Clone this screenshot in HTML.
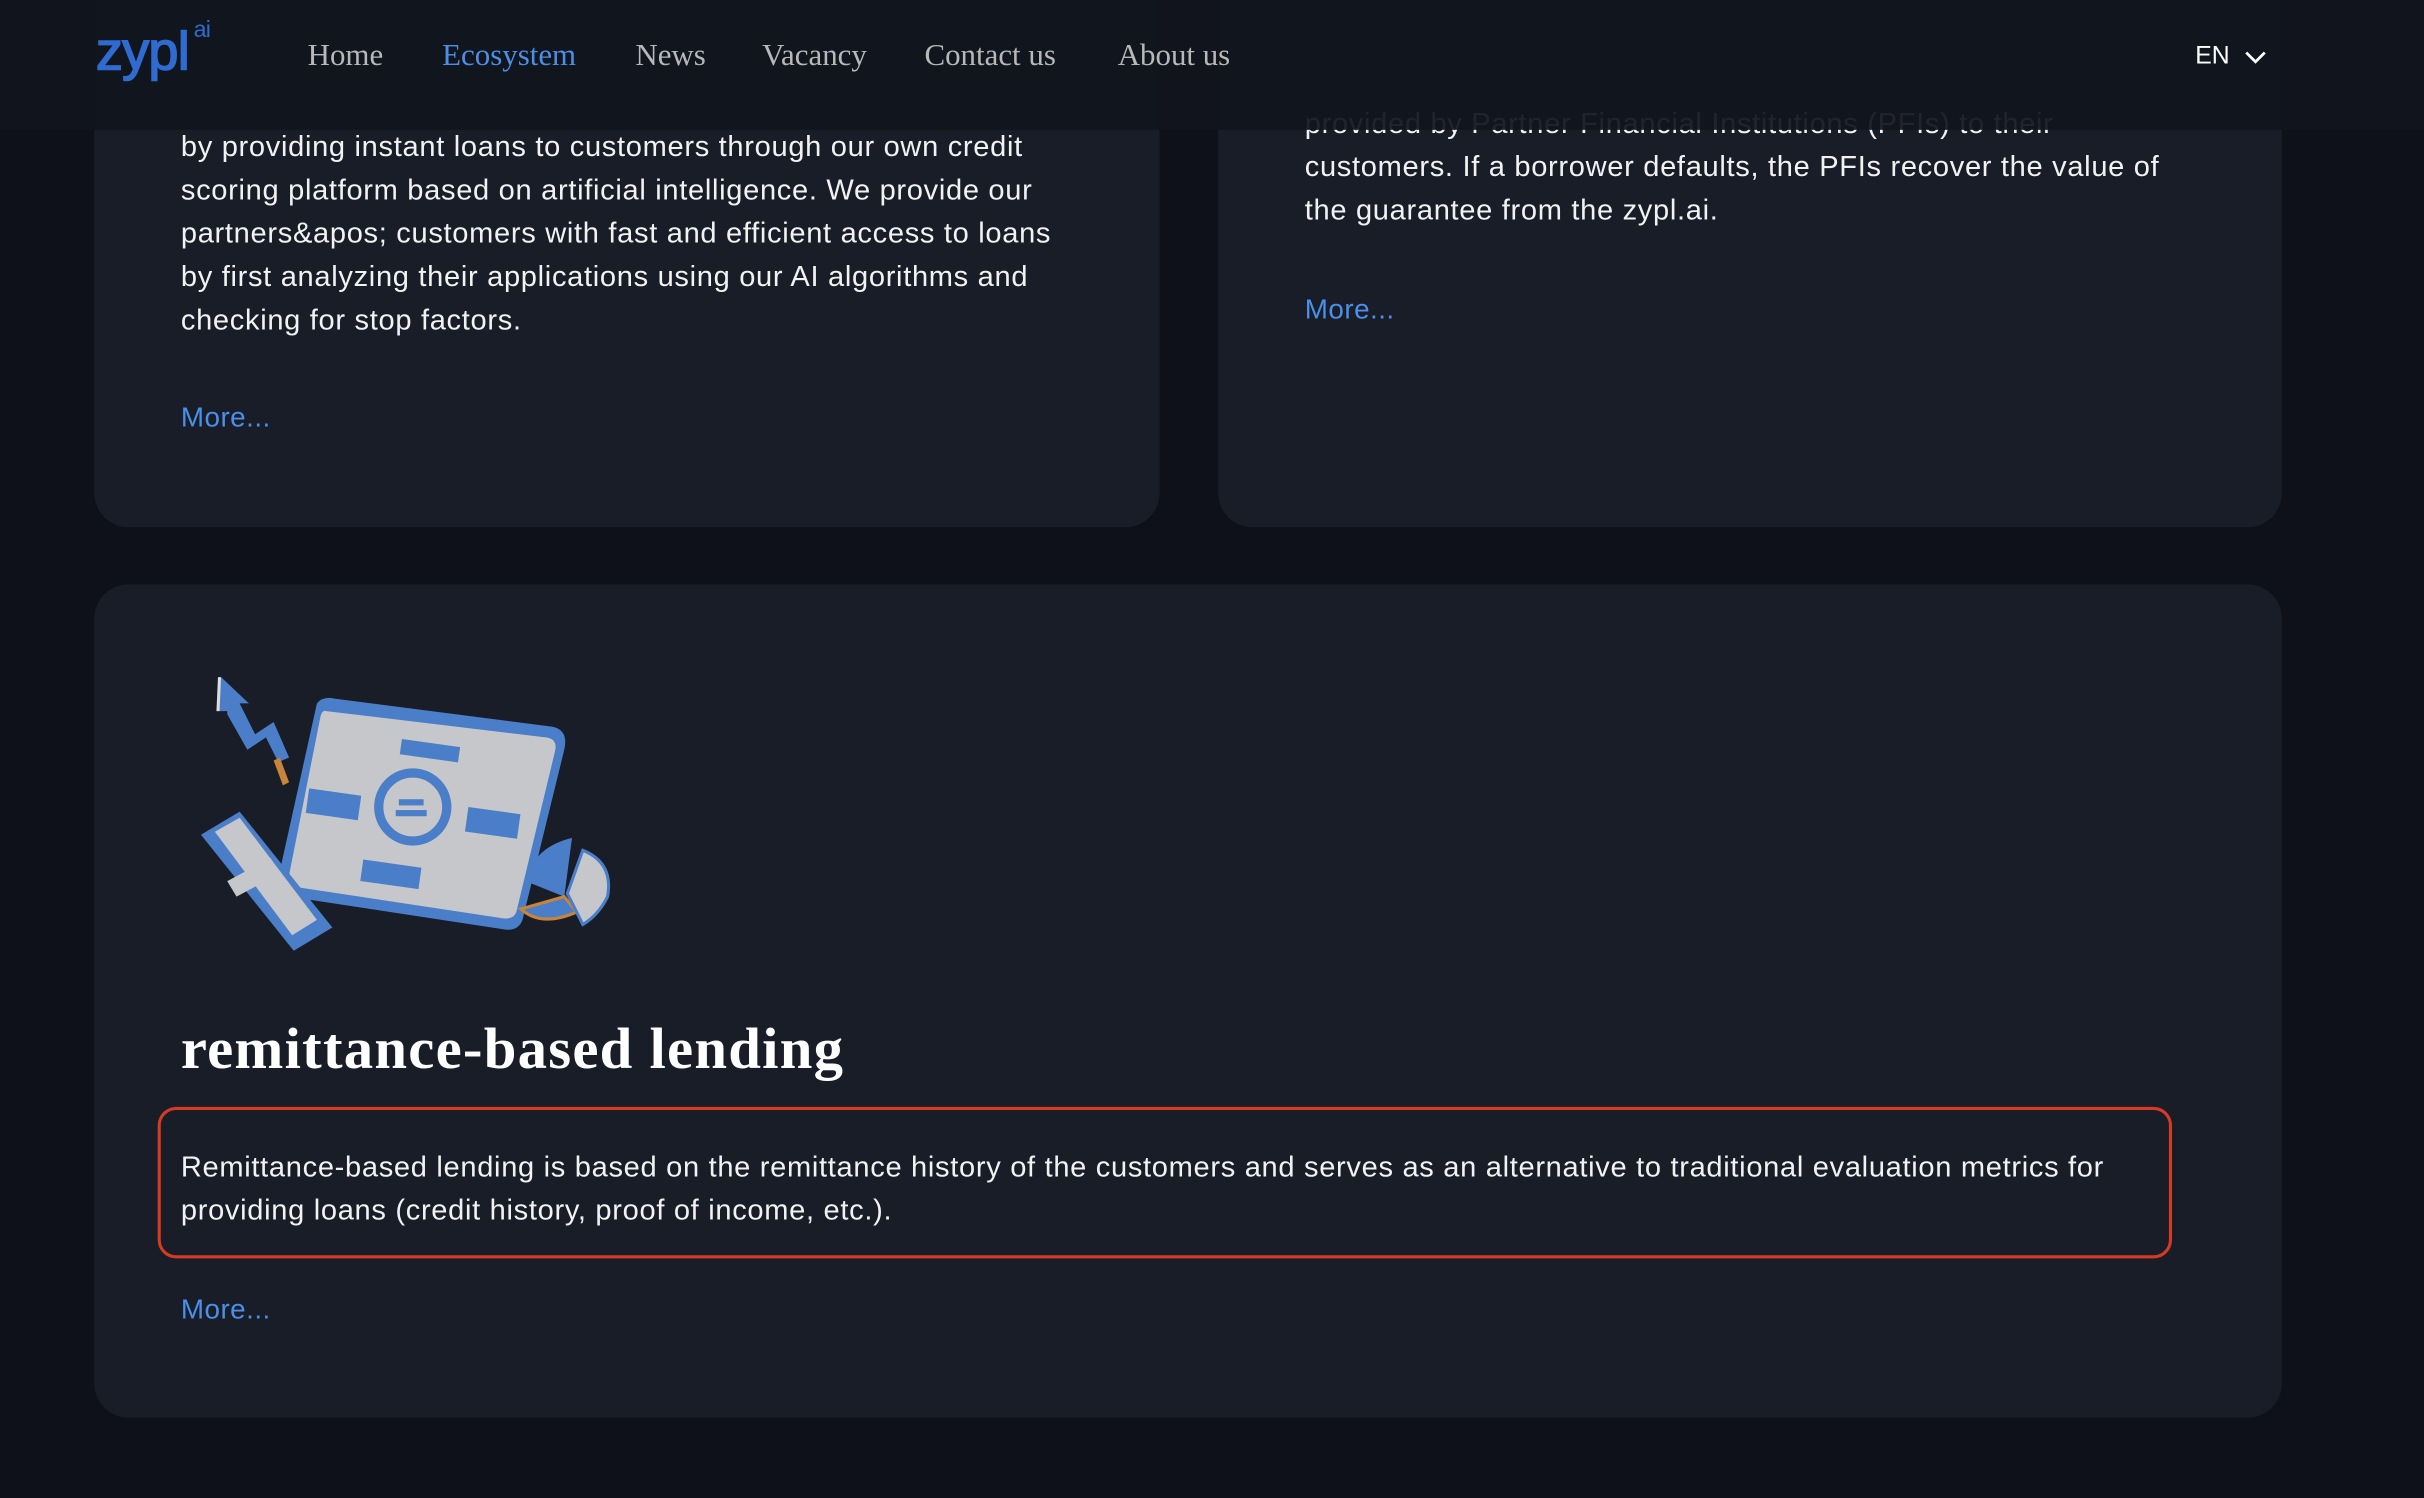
<!DOCTYPE html>
<html><head><meta charset="utf-8"><style>
html,body{margin:0;padding:0;background:#0e111a;overflow:hidden}
body{width:2424px;height:1498px}
#w{width:1568px;height:969px;transform:scale(1.54592);transform-origin:0 0;position:relative;font-family:"Liberation Sans",sans-serif;color:#f0f0f0}
.card{position:absolute;background:#191d28;border-radius:22px}
.t{position:absolute;font-size:18.8px;line-height:28px;color:#f2f2f2;letter-spacing:0.45px;white-space:nowrap}
.more{position:absolute;font-size:18px;color:#4b8fe8;letter-spacing:0.3px}
#hdr{position:absolute;left:0;top:0;width:1568px;height:84px;background:rgba(17,20,29,0.93)}
.nav{position:absolute;top:25px;font-family:"Liberation Serif",serif;font-size:20px;color:#b8b8b8}
</style></head><body><div id="w">
<div class="card" style="left:61px;top:-40px;width:689px;height:381px"></div>
<div class="card" style="left:788px;top:-40px;width:688px;height:381px"></div>
<div class="t" style="left:117px;top:81px">by providing instant loans to customers through our own credit<br>scoring platform based on artificial intelligence. We provide our<br>partners&amp;apos; customers with fast and efficient access to loans<br>by first analyzing their applications using our AI algorithms and<br>checking for stop factors.</div>
<div class="more" style="left:117px;top:260px">More...</div>
<div class="t" style="left:844px;top:66px">provided by Partner Financial Institutions (PFIs) to their<br>customers. If a borrower defaults, the PFIs recover the value of<br>the guarantee from the zypl.ai.</div>
<div class="more" style="left:844px;top:190px">More...</div>
<div id="hdr"></div>
<div style="position:absolute;left:62px;top:14px;font-size:35px;color:#2f6bd0;letter-spacing:-0.5px;-webkit-text-stroke:1px #2f6bd0">zypl<sup style="font-size:15px;vertical-align:top;position:relative;top:-3px;margin-left:3px;-webkit-text-stroke:0">ai</sup></div>
<div class="nav" style="left:199px">Home</div>
<div class="nav" style="left:286px;color:#4d8fe6">Ecosystem</div>
<div class="nav" style="left:411px">News</div>
<div class="nav" style="left:493px">Vacancy</div>
<div class="nav" style="left:598px">Contact us</div>
<div class="nav" style="left:723px">About us</div>
<div style="position:absolute;left:1420px;top:28px;font-size:16px;color:#fff">EN</div>
<svg style="position:absolute;left:1451px;top:31px" width="16" height="12" viewBox="0 0 16 12"><path d="M2 3 L8 9 L14 3" stroke="#fff" stroke-width="1.8" fill="none"/></svg>

<div class="card" style="left:61px;top:378px;width:1415px;height:539px"></div>
<svg style="position:absolute;left:125px;top:430px" width="280" height="195" viewBox="0 0 280 195">
<path d="M18 8 L36 25 L30 25 L40 45 L52 37 L62 60 L55 63 L47 47 L35 55 L22 32 L22 30 L16 30 Z" fill="#4a7ec8"/>
<path d="M16 8 L18 8 L17 30 L15 30Z" fill="#ddd"/>
<path d="M52 62 L58 78 L62 76 L56 60Z" fill="#c8843a"/>
<path d="M80 25 Q84 20 92 22 L232 40 Q243 42 240 55 L213 165 Q210 173 200 171 L62 150 Q52 148 55 138 Z" fill="#4a7ec8"/>
<path d="M86 30 L228 47 Q236 48 234 56 L209 160 Q207 165 200 164 L68 144 Q60 142 62 136 L82 35 Q83 29 86 30Z" fill="#c6c7ca"/>
<rect x="135" y="48" width="38" height="10" fill="#4a7ec8" transform="rotate(8 135 48)"/>
<rect x="75" y="80" width="34" height="16" fill="#4a7ec8" transform="rotate(8 75 80)"/>
<rect x="178" y="92" width="34" height="16" fill="#4a7ec8" transform="rotate(8 178 92)"/>
<rect x="110" y="126" width="38" height="14" fill="#4a7ec8" transform="rotate(8 110 126)"/>
<circle cx="142" cy="92" r="22" fill="none" stroke="#4a7ec8" stroke-width="6"/>
<rect x="133" y="87" width="16" height="4" fill="#4a7ec8"/><rect x="131" y="94" width="20" height="4" fill="#4a7ec8"/>
<path d="M5 110 L30 95 L90 170 L65 185 Z" fill="#4a7ec8"/>
<path d="M14 108 L30 99 L80 165 L64 175Z" fill="#c6c7ca"/>
<path d="M22 140 L50 125 L56 135 L28 150Z" fill="#c6c7ca"/>
<path d="M215 140 Q220 118 245 112 L240 150 Z" fill="#4a7ec8"/>
<path d="M212 158 Q225 170 248 160 L240 150 Z" fill="#4a7ec8" stroke="#c8843a" stroke-width="2"/>
<path d="M252 120 Q272 128 268 150 Q262 162 252 168 L242 148 Z" fill="#c6c7ca" stroke="#4a7ec8" stroke-width="2"/>
</svg>
<div style="position:absolute;left:117px;top:657px;font-family:'Liberation Serif',serif;font-weight:bold;font-size:38px;letter-spacing:0.8px;color:#fff">remittance-based lending</div>
<div style="position:absolute;left:102px;top:716px;width:1299px;height:94px;border:2px solid #d53a22;border-radius:12px"></div>
<div class="t" style="left:117px;top:741px">Remittance-based lending is based on the remittance history of the customers and serves as an alternative to traditional evaluation metrics for<br>providing loans (credit history, proof of income, etc.).</div>
<div class="more" style="left:117px;top:837px">More...</div>
</div></body></html>
